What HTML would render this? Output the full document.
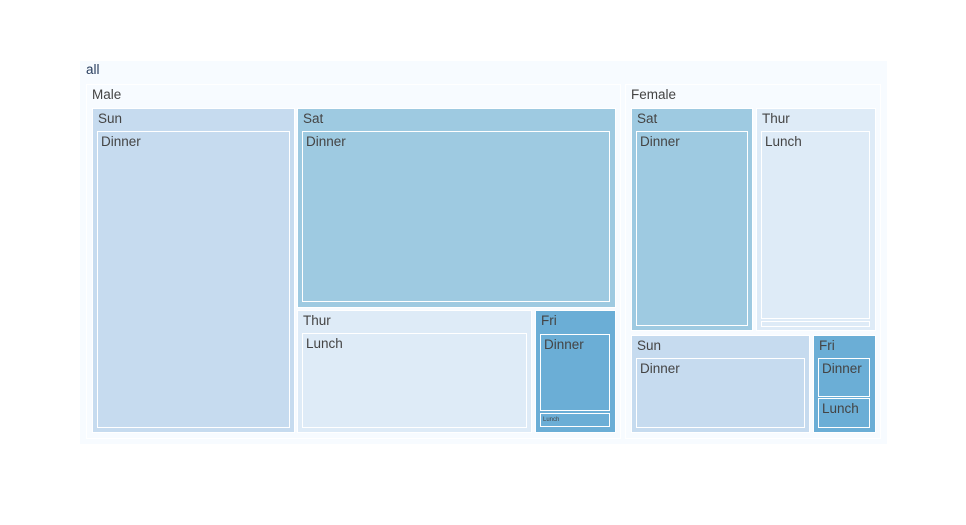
<!DOCTYPE html>
<html><head><meta charset="utf-8"><style>
body{margin:0;width:966px;height:525px;background:#fff;position:relative;overflow:hidden;font-family:"Liberation Sans","DejaVu Sans",sans-serif;}
.b{position:absolute;box-sizing:border-box;border:1px solid #fff;color:#444;font-size:13.5px;}
.b span{position:absolute;left:5px;top:2px;line-height:16px;white-space:nowrap;}
.c0{background:#f7fbff}.sun{background:#c6dbef}.sat{background:#9ecae1}.thu{background:#deebf7}.fri{background:#6baed6}
</style></head><body>
<div class="b c0" style="left:80px;top:61px;width:807px;height:383px;border-color:#f7fbff"><span style="color:#2a3f5f;top:0px">all</span></div>
<div class="b c0" style="left:86px;top:84px;width:535px;height:355px"><span>Male</span></div>
<div class="b c0" style="left:625px;top:84px;width:256px;height:355px"><span>Female</span></div>

<div class="b sun" style="left:92px;top:108px;width:203px;height:325px"><span>Sun</span></div>
<div class="b sun" style="left:97px;top:131px;width:193px;height:297px"><span style="left:3px">Dinner</span></div>

<div class="b sat" style="left:297px;top:108px;width:319px;height:200px"><span>Sat</span></div>
<div class="b sat" style="left:302px;top:131px;width:308px;height:171px"><span style="left:3px">Dinner</span></div>

<div class="b thu" style="left:297px;top:310px;width:235px;height:123px"><span>Thur</span></div>
<div class="b thu" style="left:302px;top:333px;width:225px;height:95px"><span style="left:3px">Lunch</span></div>

<div class="b fri" style="left:535px;top:310px;width:81px;height:123px"><span>Fri</span></div>
<div class="b fri" style="left:540px;top:334px;width:70px;height:77px"><span style="left:3px">Dinner</span></div>
<div class="b fri" style="left:540px;top:413px;width:70px;height:14px;font-size:6px"><span style="left:2px;top:1px;line-height:10px">Lunch</span></div>

<div class="b sat" style="left:631px;top:108px;width:122px;height:223px"><span>Sat</span></div>
<div class="b sat" style="left:636px;top:131px;width:112px;height:195px"><span style="left:3px">Dinner</span></div>

<div class="b thu" style="left:756px;top:108px;width:120px;height:223px"><span>Thur</span></div>
<div class="b thu" style="left:761px;top:131px;width:109px;height:188px"><span style="left:3px">Lunch</span></div>
<div class="b thu" style="left:761px;top:321px;width:109px;height:6px;font-size:3px"></div>

<div class="b sun" style="left:631px;top:335px;width:179px;height:98px"><span>Sun</span></div>
<div class="b sun" style="left:636px;top:358px;width:169px;height:70px"><span style="left:3px">Dinner</span></div>

<div class="b fri" style="left:813px;top:335px;width:63px;height:98px"><span>Fri</span></div>
<div class="b fri" style="left:818px;top:358px;width:52px;height:39px"><span style="left:3px">Dinner</span></div>
<div class="b fri" style="left:818px;top:398px;width:52px;height:30px"><span style="left:3px">Lunch</span></div>
</body></html>
